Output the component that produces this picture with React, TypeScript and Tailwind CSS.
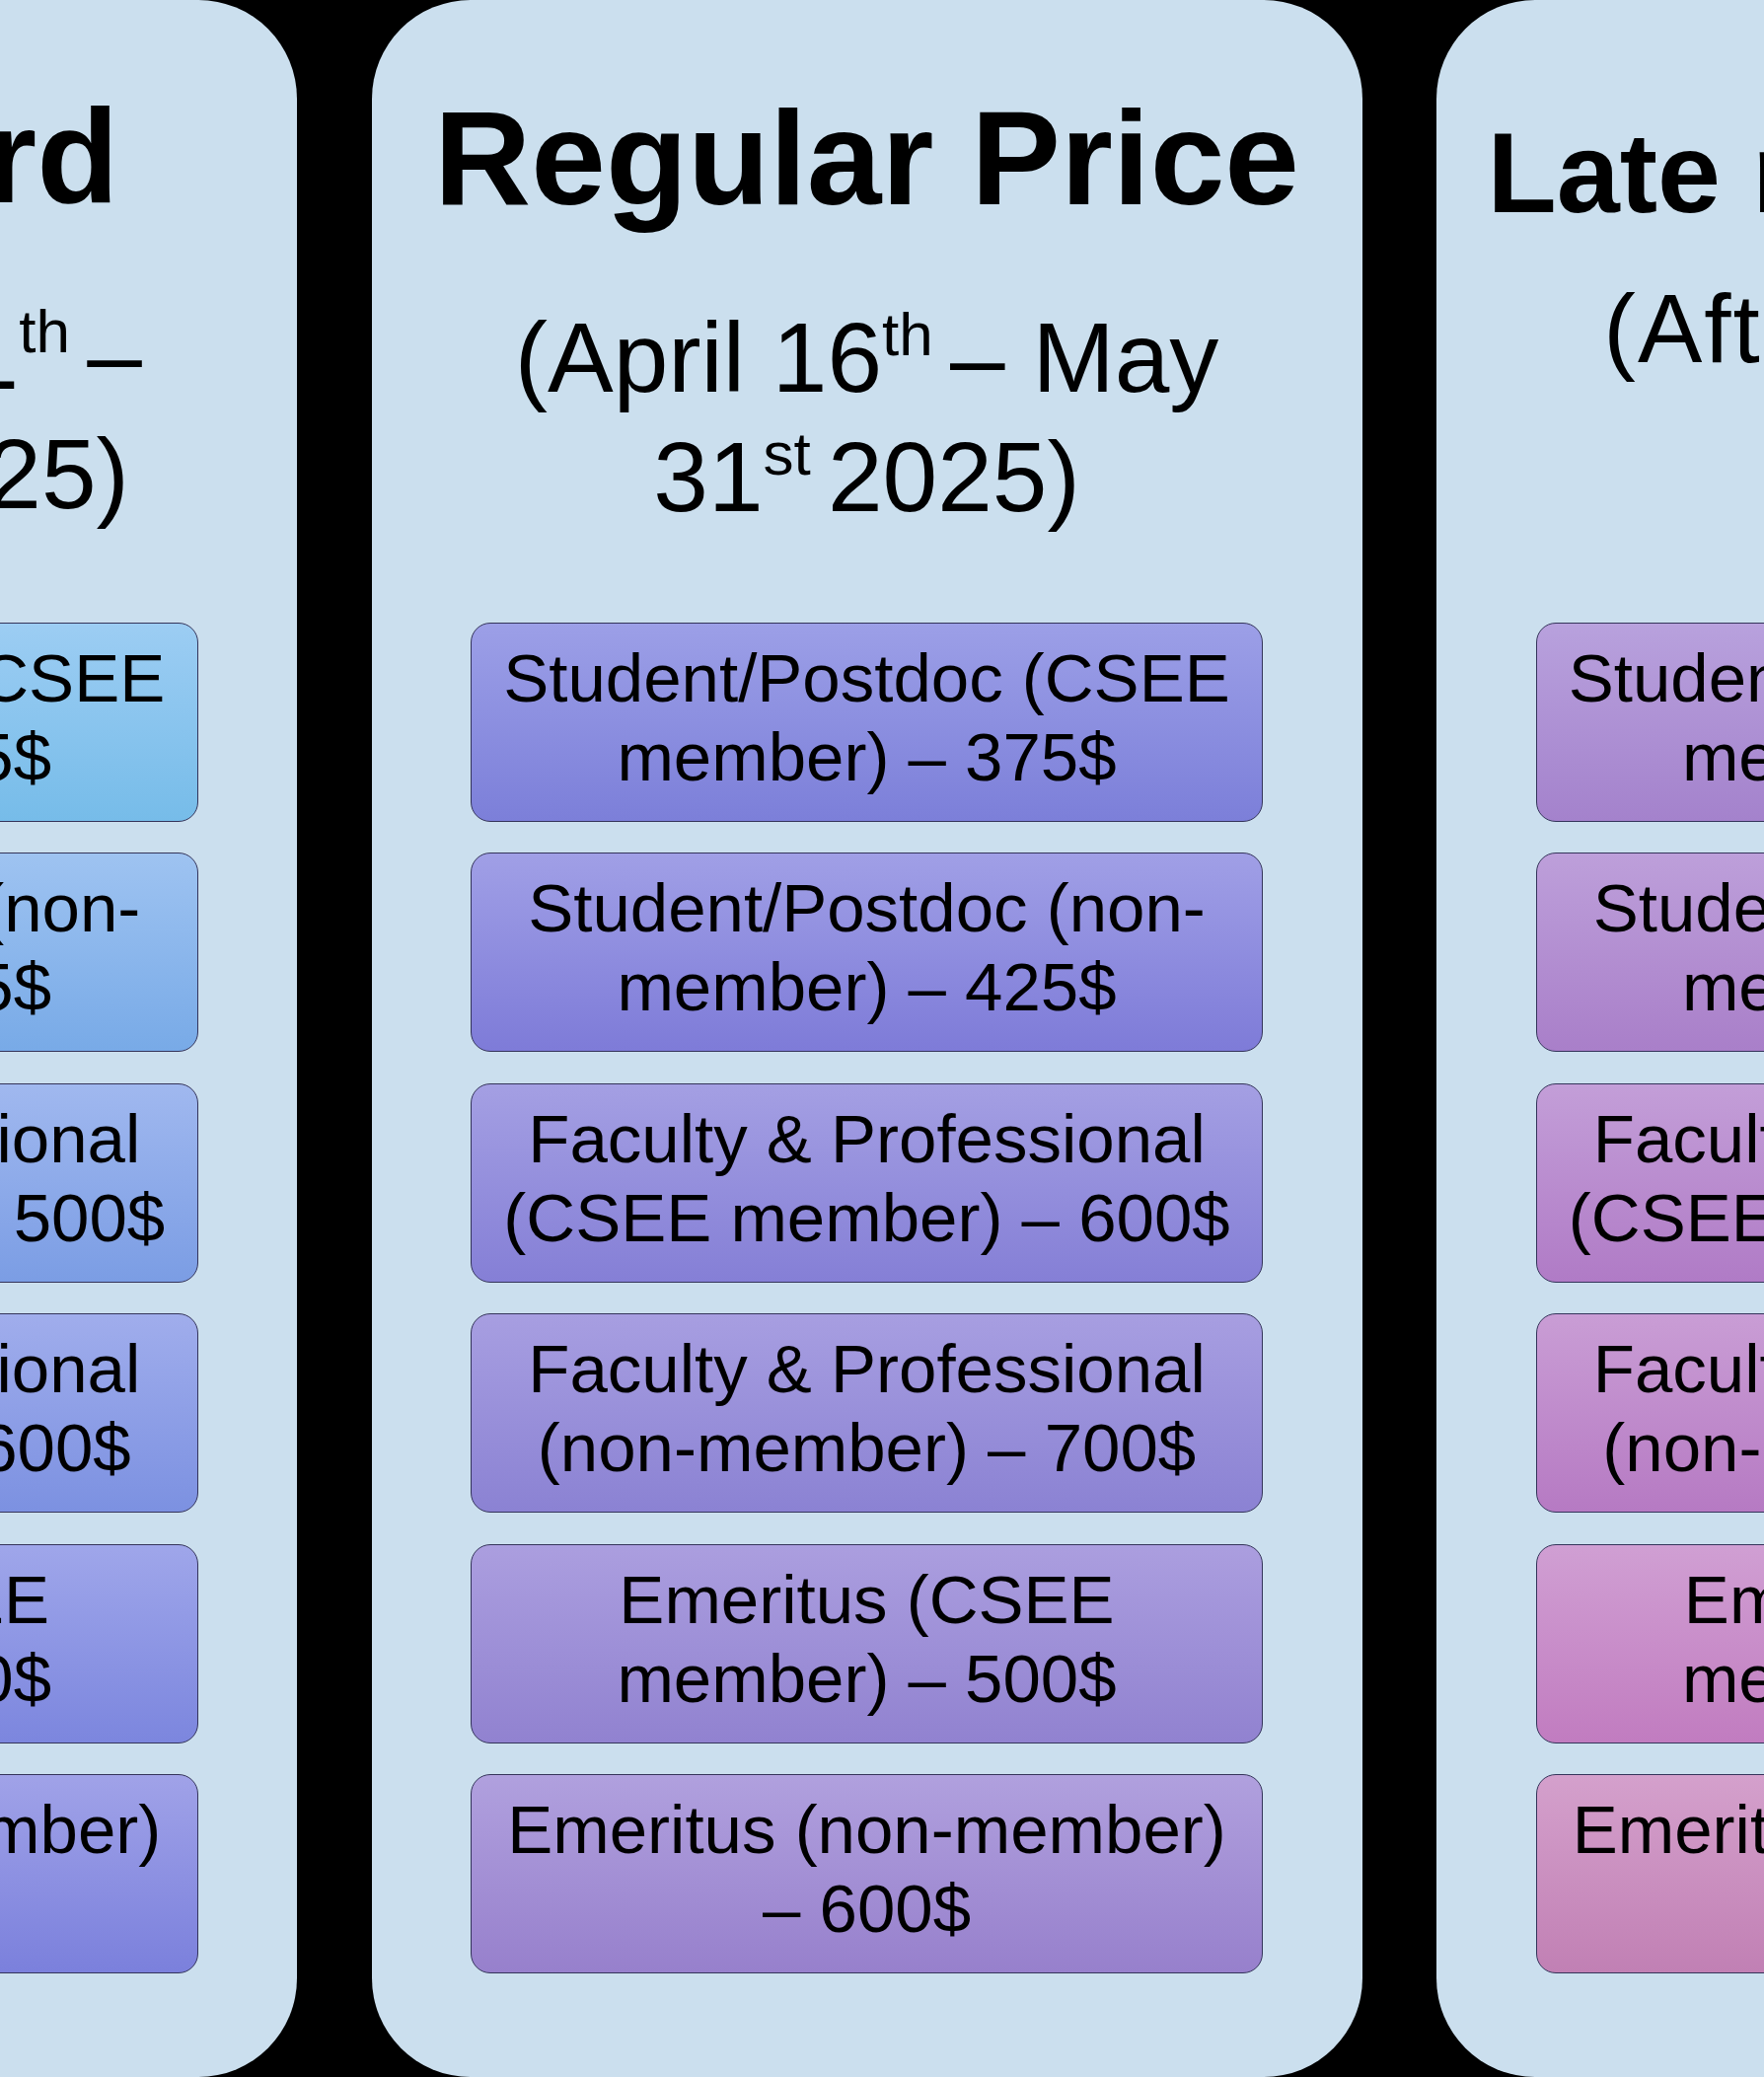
import React from "react";

type Box = { lines: [string, string]; grad: string };

type Panel = {
  title: string;
  titleCls: string;
  sub: React.ReactNode;
  subCls: string;
  boxes: Box[];
};

const font = { fontFamily: '"Liberation Sans", Arial, sans-serif' };

const Sup = ({ children }: { children: React.ReactNode }) => (
  <sup className="text-[0.62em] -top-[0.6em]">{children}</sup>
);

const panels: Panel[] = [
  {
    title: "Early Bird",
    titleCls: "pt-[90px] text-[136px]",
    sub: (
      <>
        (February 11<Sup>th </Sup>–<br />
        April 15<Sup>th </Sup>2025)
      </>
    ),
    subCls: "mt-[73px] text-[100px] leading-[121px]",
    boxes: [
      { lines: ["Student/Postdoc (CSEE", "member) – 325$"], grad: "from-[#9ccdf3] to-[#76bce9]" },
      { lines: ["Student/Postdoc (non-", "member) – 375$"], grad: "from-[#9ec3f1] to-[#78aae7]" },
      { lines: ["Faculty & Professional", "(CSEE member) – 500$"], grad: "from-[#a0b8ef] to-[#7b9de4]" },
      { lines: ["Faculty & Professional", "(non-member) – 600$"], grad: "from-[#a0adec] to-[#7c91e1]" },
      { lines: ["Emeritus (CSEE", "member) – 400$"], grad: "from-[#9fa6ea] to-[#7c86de]" },
      { lines: ["Emeritus (non-member)", "– 500$"], grad: "from-[#a0a2e8] to-[#7b80dc]" },
    ],
  },
  {
    title: "Regular Price",
    titleCls: "pt-[92px] text-[136px]",
    sub: (
      <>
        (April 16<Sup>th </Sup>– May
        <br />
        31<Sup>st </Sup>2025)
      </>
    ),
    subCls: "mt-[74px] text-[100px] leading-[121px]",
    boxes: [
      { lines: ["Student/Postdoc (CSEE", "member) – 375$"], grad: "from-[#9c9fe7] to-[#7c7fd9]" },
      { lines: ["Student/Postdoc (non-", "member) – 425$"], grad: "from-[#a09fe6] to-[#7e7bd8]" },
      { lines: ["Faculty & Professional", "(CSEE member) – 600$"], grad: "from-[#a49fe3] to-[#857fd6]" },
      { lines: ["Faculty & Professional", "(non-member) – 700$"], grad: "from-[#a79ee1] to-[#8b82d3]" },
      { lines: ["Emeritus (CSEE", "member) – 500$"], grad: "from-[#ab9edf] to-[#9182d0]" },
      { lines: ["Emeritus (non-member)", "– 600$"], grad: "from-[#b0a0de] to-[#9780cc]" },
    ],
  },
  {
    title: "Late registration",
    titleCls: "pt-[118px] text-[115px]",
    sub: (
      <>
        (After May 31<Sup>st</Sup>
        <br />
        2025)
      </>
    ),
    subCls: "mt-[41px] text-[98px] leading-[118px] tracking-[2px]",
    boxes: [
      { lines: ["Student/Postdoc (CSEE", "member) – 425$"], grad: "from-[#b8a1dd] to-[#a482cc]" },
      { lines: ["Student/Postdoc (non-", "member) – 475$"], grad: "from-[#bd9fda] to-[#a97fc9]" },
      { lines: ["Faculty & Professional", "(CSEE member) – 700$"], grad: "from-[#c39ed8] to-[#b07bc6]" },
      { lines: ["Faculty & Professional", "(non-member) – 800$"], grad: "from-[#c99dd5] to-[#b67ac3]" },
      { lines: ["Emeritus (CSEE", "member) – 600$"], grad: "from-[#d09fd3] to-[#c17cc0]" },
      { lines: ["Emeritus (non-member)", "– 700$"], grad: "from-[#d4a0cc] to-[#c180b4]" },
    ],
  },
];

function PricePanel({ p }: { p: Panel }) {
  return (
    <div className="w-[1004px] h-[2105px] shrink-0 rounded-[100px] bg-[#cbdfee] flex flex-col items-center text-black">
      <div className="h-[631px] w-full flex flex-col items-center shrink-0">
        <div className={`${p.titleCls} font-bold leading-none whitespace-nowrap`}>{p.title}</div>
        <div className={`${p.subCls} text-center whitespace-nowrap`}>{p.sub}</div>
      </div>
      <div className="w-[803px] flex flex-col gap-[31.4px]">
        {p.boxes.map((b, i) => (
          <div
            key={i}
            className={`h-[202px] rounded-[20px] border-[1.5px] border-[#34345a] bg-linear-to-b ${b.grad} flex flex-col items-center justify-center pb-[8px] text-[69px] leading-[80px] text-center`}
          >
            <div className="whitespace-nowrap">{b.lines[0]}</div>
            <div className="whitespace-nowrap">{b.lines[1]}</div>
          </div>
        ))}
      </div>
    </div>
  );
}

export default function App() {
  return (
    <div className="w-[1788px] h-[2105px] overflow-hidden bg-black" style={font}>
      <div className="flex gap-[75.5px] ml-[-703px] w-max">
        {panels.map((p, i) => (
          <PricePanel key={i} p={p} />
        ))}
      </div>
    </div>
  );
}
